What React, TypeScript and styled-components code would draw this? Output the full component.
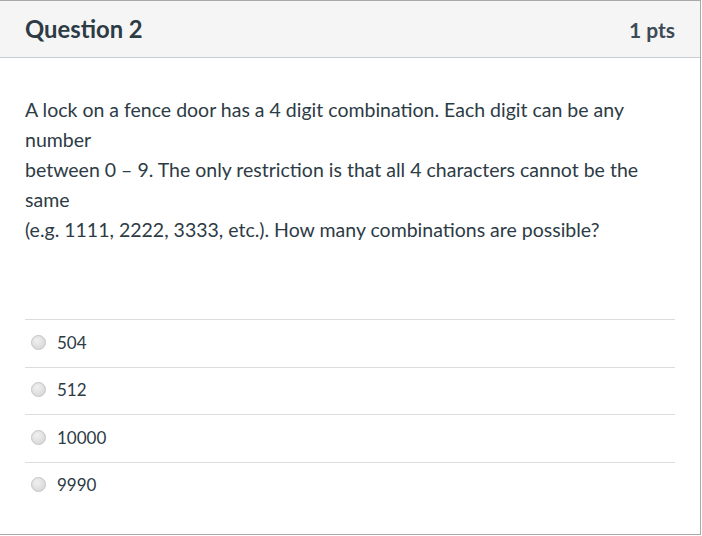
import styled, { createGlobalStyle } from "styled-components";

const GlobalStyle = createGlobalStyle`
  body {
    margin: 0;
    background: #fff;
    font-family: Lato, "Open Sans", sans-serif;
    color: #2d3b45;
  }
`;

const answers = ["504", "512", "10000", "9990"];

export default function App() {
  return (<>
    <GlobalStyle />
    <Card>
      <Header>
        <Title>Question 2</Title>
        <Points>1 pts</Points>
      </Header>
      <Body>
        <Text>
          A lock on a fence door has a 4 digit combination. Each digit can be any<br />
          number<br />
          between 0 – 9. The only restriction is that all 4 characters cannot be the<br />
          same<br />
          (e.g. 1111, 2222, 3333, etc.). How many combinations are possible?
        </Text>
        <Answers>
          { answers.map((answer) => (
            <Answer key={answer}>
              <Radio />
              <span>{answer}</span>
            </Answer>
          )) }
        </Answers>
      </Body>
    </Card>
  </>);
}

const Card = styled.div`
  box-sizing: border-box;
  width: 701px;
  height: 535px;
  border-top: 1px solid #a9a9a9;
  border-right: 1px solid #a9a9a9;
  border-bottom: 1px solid #a9a9a9;
  display: flex;
  flex-direction: column;
`;

const Header = styled.div`
  box-sizing: border-box;
  height: 57px;
  padding: 0 25px;
  background: #f5f5f5;
  border-bottom: 1px solid #c7cdd1;
  display: flex;
  align-items: center;
  justify-content: space-between;
`;

const Title = styled.span`
  font-size: 23.8px;
  font-weight: 700;
  color: #2d3b45;
`;

const Points = styled.span`
  font-size: 21px;
  font-weight: 700;
  color: #3d4b55;
`;

const Body = styled.div`
  padding: 37px 25px 0;
`;

const Text = styled.p`
  margin: 0;
  font-size: 19.5px;
  line-height: 30px;
  color: #2d3b45;
`;

const Answers = styled.div`
  margin-top: 74px;
`;

const Answer = styled.label`
  box-sizing: border-box;
  height: 47.5px;
  border-top: 1px solid #dadcde;
  display: flex;
  align-items: center;
  gap: 11px;
  padding-left: 6px;
  padding-bottom: 2px;
  font-size: 17px;
  color: #2d3b45;
`;

const Radio = styled.span`
  box-sizing: border-box;
  width: 15px;
  height: 15px;
  border-radius: 50%;
  border: 1px solid #c4c4c4;
  background: radial-gradient(circle at 40% 35%, #f0f0f0, #d2d2d2);
`;
